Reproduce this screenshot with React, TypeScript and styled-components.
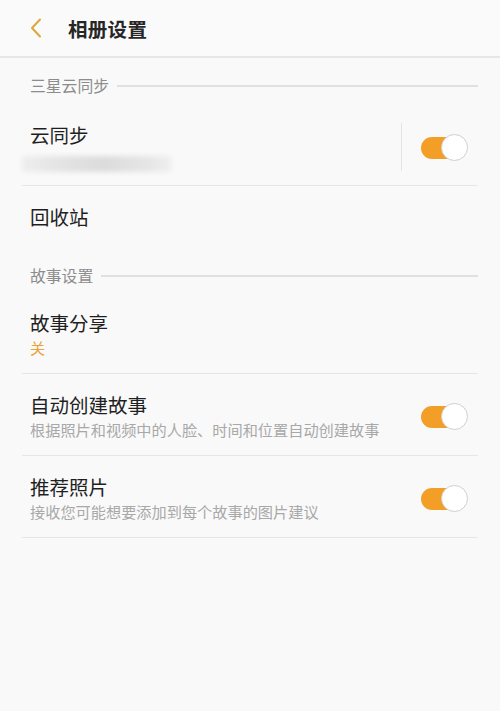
import React, { useState } from "react";
import styled, { createGlobalStyle } from "styled-components";

const GlobalStyle = createGlobalStyle`
    html, body {
        margin: 0;
        padding: 0;
        background: #f9f9f9;
    }
    body {
        font-family: "Noto Sans CJK SC", "Noto Sans", sans-serif;
    }
`;

const Page = styled.div`
    width: 500px;
    min-height: 711px;
    background: #f9f9f9;
`;

const Header = styled.header`
    height: 56px;
    display: flex;
    align-items: center;
    border-bottom: 2px solid #e6e6e6;
    background: #fafafa;
`;

const BackButton = styled.button`
    width: 68px;
    height: 56px;
    padding: 0 0 0 30px;
    border: none;
    background: none;
    display: flex;
    align-items: center;
`;

const Title = styled.h1`
    margin: 0;
    font-size: 19.5px;
    font-weight: 700;
    color: #262626;
    letter-spacing: 0.3px;
`;

const Content = styled.div`
    padding: 0 22px;
`;

const SectionHeader = styled.div`
    display: flex;
    align-items: center;
    gap: 8px;
    padding: 18px 0 10px 8px;
    line-height: 20px;
    font-size: 15.8px;
    color: #8c8c8c;

    &::after {
        content: "";
        flex: 1;
        height: 1.5px;
        background: #e0e0e0;
    }
`;

const Row = styled.div<{ $last?: boolean; $top?: number; $bottom?: number }>`
    display: flex;
    align-items: center;
    padding: ${(p) => p.$top ?? 18}px 10px ${(p) => p.$bottom ?? 15}px 8px;
    border-bottom: ${(p) => (p.$last ? "none" : "1px solid #e6e6e6")};
`;

const SingleRow = styled.div`
    display: flex;
    align-items: center;
    height: 62px;
    padding: 0 10px 0 8px;
`;

const RowText = styled.div`
    flex: 1;
    min-width: 0;
`;

const RowTitle = styled.div`
    font-size: 19.5px;
    line-height: 26px;
    color: #1f1f1f;
`;

const RowSub = styled.div<{ $accent?: boolean }>`
    font-size: 15.2px;
    line-height: 22px;
    color: ${(p) => (p.$accent ? "#eba134" : "#a8a8a8")};
`;

const BlurredAccount = styled.div`
    margin: 8px 0 0 -8px;
    width: 150px;
    height: 16px;
    border-radius: 4px;
    background: linear-gradient(90deg, #eeeeee 0%, #e2e2e2 30%, #dcdcdc 55%, #e6e6e6 85%, #f0f0f0 100%);
    filter: blur(2px);
`;

const VDivider = styled.div`
    width: 1.5px;
    height: 48px;
    background: #e3e3e3;
    margin-right: 19px;
`;

const SwitchWrap = styled.button`
    position: relative;
    width: 47px;
    height: 27px;
    padding: 0;
    border: none;
    background: none;
    flex-shrink: 0;
    cursor: pointer;
`;

const Track = styled.span<{ $on: boolean }>`
    position: absolute;
    left: 0;
    top: 3px;
    width: 40px;
    height: 22px;
    border-radius: 11px;
    background: ${(p) => (p.$on ? "#f29e27" : "#d0d0d0")};
`;

const Knob = styled.span<{ $on: boolean }>`
    position: absolute;
    top: 0;
    left: ${(p) => (p.$on ? "20px" : "0")};
    width: 27px;
    height: 27px;
    box-sizing: border-box;
    border-radius: 50%;
    background: #fff;
    border: 1.5px solid #cfcfcf;
`;

const Switch = ({ initial }: { initial: boolean }) => {
    const [on, setOn] = useState(initial);
    return (
        <SwitchWrap onClick={() => setOn(!on)}>
            <Track $on={on} />
            <Knob $on={on} />
        </SwitchWrap>
    );
};

const BackIcon = () => (
    <svg width="12" height="20" viewBox="0 0 12 20">
        <path d="M10 1.5 L2 10 L10 18.5" fill="none" stroke="#dea53c" strokeWidth="2" strokeLinecap="round" strokeLinejoin="round" />
    </svg>
);

const App = () => {
    return (
        <Page>
            <GlobalStyle />
            <Header>
                <BackButton>
                    <BackIcon />
                </BackButton>
                <Title>相册设置</Title>
            </Header>
            <Content>
                <SectionHeader>三星云同步</SectionHeader>
                <Row $top={16} $bottom={13}>
                    <RowText>
                        <RowTitle>云同步</RowTitle>
                        <BlurredAccount />
                    </RowText>
                    <VDivider />
                    <Switch initial={true} />
                </Row>
                <SingleRow>
                    <RowText>
                        <RowTitle>回收站</RowTitle>
                    </RowText>
                </SingleRow>

                <SectionHeader>故事设置</SectionHeader>
                <Row $top={14} $bottom={15}>
                    <RowText>
                        <RowTitle>故事分享</RowTitle>
                        <RowSub $accent>关</RowSub>
                    </RowText>
                </Row>
                <Row>
                    <RowText>
                        <RowTitle>自动创建故事</RowTitle>
                        <RowSub>根据照片和视频中的人脸、时间和位置自动创建故事</RowSub>
                    </RowText>
                    <Switch initial={true} />
                </Row>
                <Row>
                    <RowText>
                        <RowTitle>推荐照片</RowTitle>
                        <RowSub>接收您可能想要添加到每个故事的图片建议</RowSub>
                    </RowText>
                    <Switch initial={true} />
                </Row>
            </Content>
        </Page>
    );
};

export default App;
